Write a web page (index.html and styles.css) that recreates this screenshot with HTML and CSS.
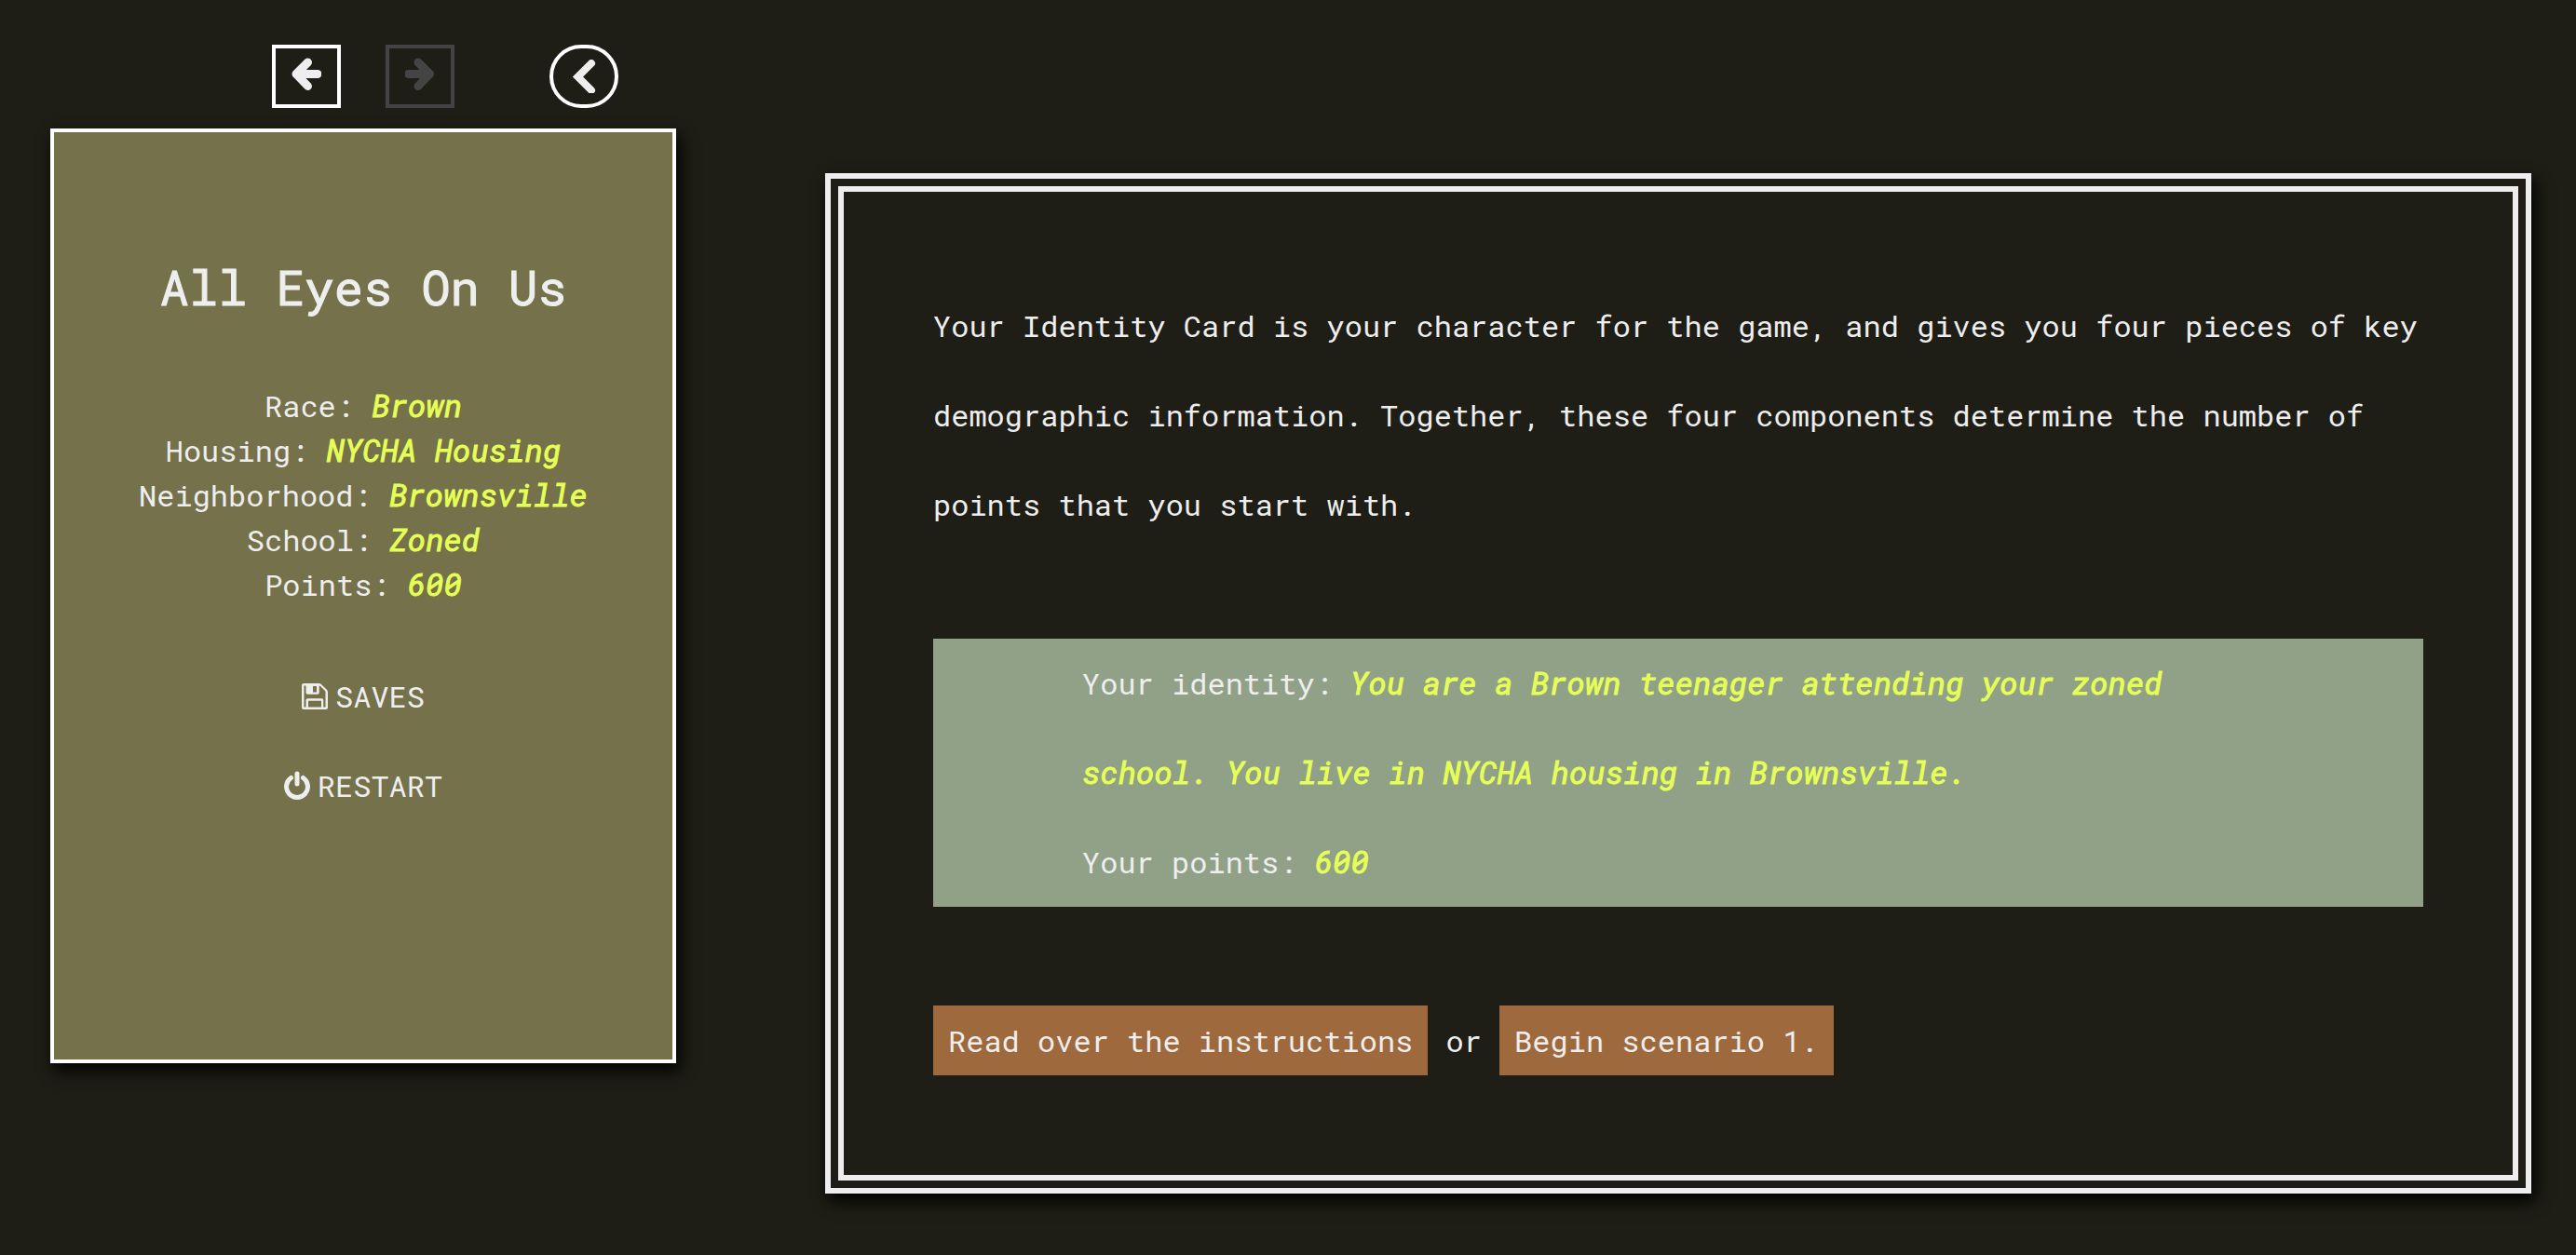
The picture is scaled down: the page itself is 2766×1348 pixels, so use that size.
FILE: index.html
```html
<!DOCTYPE html>
<html lang="en">
<head>
<meta charset="utf-8">
<meta name="viewport" content="width=device-width, initial-scale=1">
<title>All Eyes On Us</title>
<link rel="stylesheet" href="styles.css">
</head>
<body>
<div class="layout">
  <aside class="sidebar">
    <div class="toolbar">
      <button class="tool" type="button" aria-label="Go back">
        <svg class="tool-icon" viewBox="0 0 32 36" aria-hidden="true"><path d="M17.500 5 5 17.500 17.500 30.500M5 17.500H28"/></svg>
      </button>
      <button class="tool" type="button" aria-label="Go forward" disabled>
        <svg class="tool-icon" viewBox="0 0 32 36" aria-hidden="true"><path d="M14 5 26.500 17.500 14 30.500M26.500 17.500H3.500"/></svg>
      </button>
      <button class="tool tool-round" type="button" aria-label="Hide sidebar">
        <svg class="tool-icon" viewBox="0 0 32 36" aria-hidden="true"><path class="chevron" d="M24 4 9.500 18.500 24 33"/></svg>
      </button>
    </div>
    <div class="panel">
      <h1 class="title">All Eyes On Us</h1>
      <ul class="stats">
        <li>Race: <em>Brown</em></li>
        <li>Housing: <em>NYCHA Housing</em></li>
        <li>Neighborhood: <em>Brownsville</em></li>
        <li>School: <em>Zoned</em></li>
        <li>Points: <em>600</em></li>
      </ul>
      <nav class="menu">
        <button class="menu-item" type="button">
          <svg class="menu-icon" viewBox="0 0 28 28" aria-hidden="true"><path fill-rule="evenodd" d="M2 0H18.500Q20 0 21.200 1.200L26.800 6.800Q28 8 28 9.500V26Q28 28 26 28H2Q0 28 0 26V2Q0 0 2 0ZM2.500 2.500V25.500H4.500V18Q4.500 16.200 6.300 16.200H21.500Q23.300 16.200 23.300 18V25.500H25.500V9.500Q25.500 8.600 25 8L20 3Q19.300 2.500 18.700 2.500V10Q18.700 11.800 17 11.800H6.300Q4.500 11.800 4.500 10V2.500ZM12 3V9.500H16V3ZM7 18.700V25.500H21V18.700Z"/></svg>
          <span>SAVES</span>
        </button>
        <button class="menu-item" type="button">
          <svg class="menu-icon" viewBox="0 0 28 32" aria-hidden="true"><path class="power" d="M14 3V14M7.500 7.500A11.500 11.500 0 1 0 20.500 7.500"/></svg>
          <span>RESTART</span>
        </button>
      </nav>
    </div>
  </aside>
  <main class="frame">
    <article class="passage">
      <p>Your Identity Card is your character for the game, and gives you four pieces of key demographic information. Together, these four components determine the number of points that you start with.</p>
      <div class="card">
        <p>Your identity: <em>You are a Brown teenager attending your zoned school. You live in NYCHA housing in Brownsville.</em></p>
        <p>Your points: <em>600</em></p>
      </div>
      <p><a class="choice" href="#instructions">Read over the instructions</a> or <a class="choice" href="#scenario-1">Begin scenario 1.</a></p>
    </article>
  </main>
</div>
</body>
</html>
```

FILE: styles.css
```css
* {
  box-sizing: border-box;
}

body {
  margin: 0;
  background: #1e1e16;
  color: #eee;
  font: 32px/96px "Roboto Mono", "Liberation Mono", monospace;
}

p, h1, ul {
  margin: 0;
  padding: 0;
}

em {
  color: #e6ff57;
  font-size: 33px;
  line-height: 1;
  -webkit-text-stroke: 1px;
}

.layout {
  display: grid;
  grid-template-columns: 672px minmax(0, 1fr);
  gap: 160px;
  align-items: start;
  padding: 48px 48px 64px 54px;
}

.toolbar {
  display: flex;
  justify-content: flex-end;
  gap: 48px;
  margin-bottom: 22px;
  padding-right: 62px;
}

.tool {
  display: flex;
  align-items: center;
  justify-content: center;
  width: 74px;
  height: 68px;
  padding: 0 0 4px;
  border: 4px solid #fff;
  background: none;
  color: #eee;
}

.tool:disabled {
  border-color: #444;
  color: #444;
}

.tool-round {
  margin-left: 54px;
  padding: 0;
  border-radius: 34px;
}

.tool-icon {
  width: 32px;
  height: 36px;
  fill: none;
  stroke: currentColor;
  stroke-width: 9;
  stroke-linecap: round;
  stroke-linejoin: round;
}

.chevron {
  stroke-linejoin: miter;
  stroke-width: 8;
}

.panel {
  padding: 118px 44px 246px;
  border: 4px solid #fff;
  background: #75714a;
  box-shadow: 4px 8px 16px #000;
  text-align: center;
}

.title {
  margin-bottom: 56px;
  font-size: 52px;
  font-weight: 400;
  line-height: 96px;
  -webkit-text-stroke: 1px;
}

.stats {
  margin-bottom: 48px;
  line-height: 48px;
  list-style: none;
}

.menu {
  display: flex;
  flex-direction: column;
  align-items: center;
}

.menu-item {
  display: flex;
  align-items: center;
  gap: 8px;
  padding: 0;
  border: 0;
  background: none;
  color: inherit;
  font: inherit;
}

.menu-icon {
  width: 28px;
  height: 32px;
  fill: currentColor;
}

.power {
  fill: none;
  stroke: currentColor;
  stroke-width: 5;
  stroke-linecap: round;
}

.frame {
  margin-top: 138px;
  padding: 8px;
  border: 6px solid #eee;
  box-shadow: 4px 8px 16px #000;
}

.passage {
  display: grid;
  gap: 96px;
  padding: 96px;
  border: 6px solid #eee;
}

.card {
  padding: 0 10%;
  background: #91a187;
}

.choice {
  padding: 16px;
  background: #9e6a3d;
  color: inherit;
  text-decoration: none;
}
```
